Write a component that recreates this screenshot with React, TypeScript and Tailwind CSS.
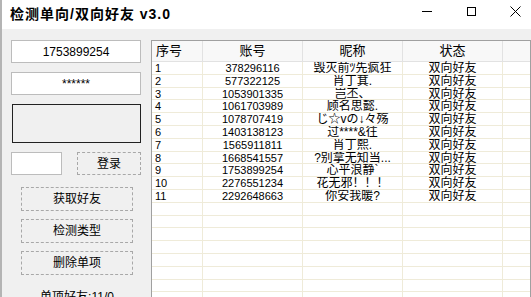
import React from "react";

const font = { fontFamily: '"Liberation Sans", "Noto Sans CJK SC", sans-serif' };

const rows = [
  { id: 1, qq: "378296116", name: "毁灭前ﾂ先疯狂", state: "双向好友" },
  { id: 2, qq: "577322125", name: "肖丁萁.", state: "双向好友" },
  { id: 3, qq: "1053901335", name: "岂丕、", state: "双向好友" },
  { id: 4, qq: "1061703989", name: "顾名思懿.", state: "双向好友" },
  { id: 5, qq: "1078707419", name: "じ☆vの↓々殇", state: "双向好友" },
  { id: 6, qq: "1403138123", name: "过****&往", state: "双向好友" },
  { id: 7, qq: "1565911811", name: "肖丁熙.", state: "双向好友" },
  { id: 8, qq: "1668541557", name: "?别拿无知当...", state: "双向好友" },
  { id: 9, qq: "1753899254", name: "心平浪静`", state: "双向好友" },
  { id: 10, qq: "2276551234", name: "花无邪！！！", state: "双向好友" },
  { id: 11, qq: "2292648663", name: "你安我暖?", state: "双向好友" },
];

const emptyRows = Array.from({ length: 8 }, (_, i) => i);

function Row({ id, qq, name, state }: { id?: number; qq?: string; name?: string; state?: string }) {
  return (
    <div className="flex h-[12.8px] leading-[12.8px] text-[12px] text-black">
      <div className="w-[51px] shrink-0 border-r border-b border-[#efebd9] pl-[3px] text-[11px]">{id}</div>
      <div className="w-[100px] shrink-0 border-r border-b border-[#efebd9] text-center text-[11px]">{qq}</div>
      <div className="w-[100px] shrink-0 border-r border-b border-[#efebd9] text-center whitespace-nowrap overflow-hidden">{name}</div>
      <div className="w-[100px] shrink-0 border-r border-b border-[#efebd9] text-center">{state}</div>
      <div className="flex-1 border-b border-[#efebd9]" />
    </div>
  );
}

function Btn({ label, className }: { label: string; className: string }) {
  return (
    <button className={`border border-dashed border-[#a8a8a8] bg-[#f0f0f0] text-[12px] text-black ${className}`}>
      {label}
    </button>
  );
}

export default function App() {
  return (
    <div className="w-[531px] h-[297px] overflow-hidden flex flex-col border-l-2 border-[#b4b4b4]" style={font}>
      {/* Title bar */}
      <div className="h-[29px] shrink-0 bg-white flex items-center">
        <div className="pl-[8px] text-[14px] font-bold text-black tracking-[1px]">检测单向/双向好友 v3.0</div>
        <div className="ml-auto -mr-[6px] flex h-full">
          <div className="w-[44px] flex justify-center pt-[11px]">
            <div className="w-[10px] h-px bg-black" />
          </div>
          <div className="w-[44px] flex justify-center pt-[7px]">
            <div className="w-[9px] h-[9px] border border-black" />
          </div>
          <div className="w-[44px] flex justify-center pt-[6px]">
            <svg width="11" height="11" viewBox="0 0 11 11">
              <path d="M0.5 0.5 L10.5 10.5 M10.5 0.5 L0.5 10.5" stroke="black" strokeWidth="1" />
            </svg>
          </div>
        </div>
      </div>

      {/* Body */}
      <div className="flex-1 bg-[#f0f0f0] flex">
        {/* Left panel */}
        <div className="w-[149px] shrink-0 flex flex-col pt-[11px] pl-[9px]">
          <div className="w-[130px] h-[23px] bg-white border border-[#bcbcbc] flex items-center justify-center text-[12px]">
            1753899254
          </div>
          <div className="mt-[9px] w-[130px] h-[23px] bg-white border border-[#bcbcbc] flex items-center justify-center text-[12px]">
            ******
          </div>
          <div className="mt-[9px] ml-px w-[129px] h-[39px] bg-[#f0f0f0] border border-[#222]" />
          <div className="mt-[9px] flex items-center">
            <div className="w-[51px] h-[23px] bg-white border border-[#bcbcbc]" />
            <Btn label="登录" className="ml-[15px] w-[64px] h-[23px]" />
          </div>
          <div className="pl-[10px] flex flex-col">
            <Btn label="获取好友" className="mt-[12px] w-[112px] h-[24px]" />
            <Btn label="检测类型" className="mt-[8px] w-[112px] h-[24px]" />
            <Btn label="删除单项" className="mt-[8px] w-[112px] h-[24px]" />
          </div>
          <div className="mt-[15px] w-[132px] text-center text-[12px] leading-[14px] text-black">单项好友:11/0</div>
        </div>

        {/* Table */}
        <div className="mt-[11px] w-[380px] shrink-0 bg-white border-l border-t border-r border-[#a0a0a0] flex flex-col">
          <div className="flex h-[21px] shrink-0 bg-[#f8f8f8] border-b border-[#e2e2e2] text-[13px] text-black">
            <div className="w-[51px] shrink-0 border-r border-[#e2e2e2] pl-[4px] flex items-center">序号</div>
            <div className="w-[100px] shrink-0 border-r border-[#e2e2e2] flex items-center justify-center">账号</div>
            <div className="w-[100px] shrink-0 border-r border-[#e2e2e2] flex items-center justify-center">昵称</div>
            <div className="w-[100px] shrink-0 border-r border-[#e2e2e2] flex items-center justify-center">状态</div>
            <div className="flex-1" />
          </div>
          {rows.map((r) => (
            <Row key={r.id} {...r} />
          ))}
          {emptyRows.map((i) => (
            <Row key={`e${i}`} />
          ))}
        </div>
      </div>
    </div>
  );
}
